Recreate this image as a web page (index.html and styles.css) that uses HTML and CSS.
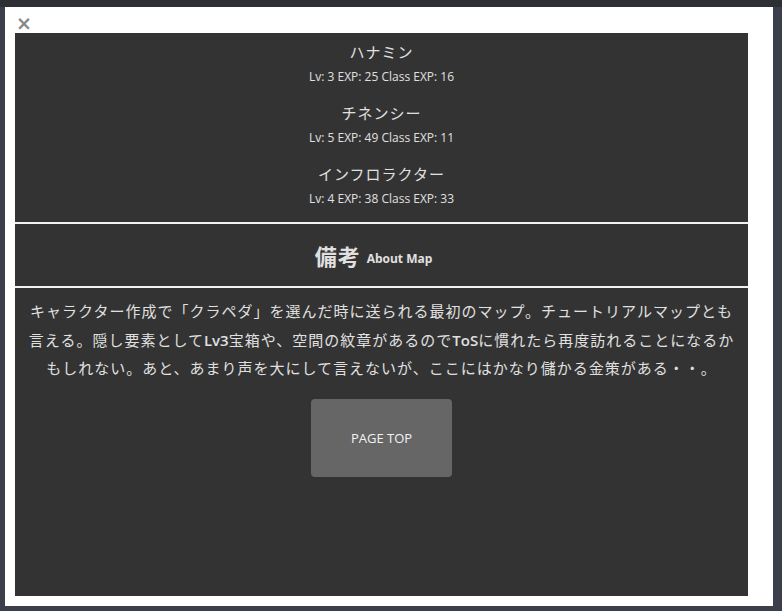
FILE: index.html
```html
<!DOCTYPE html>
<html lang="ja">
<head>
<meta charset="utf-8">
<link rel="stylesheet" href="styles.css">
</head>
<body>
<div class="backdrop">
  <div class="modal">
    <div class="close">×</div>
    <div class="panel">
      <div class="monsters">
        <div class="mon">
          <div class="name">ハナミン</div>
          <div class="stats">Lv: 3 EXP: 25 Class EXP: 16</div>
        </div>
        <div class="mon">
          <div class="name">チネンシー</div>
          <div class="stats">Lv: 5 EXP: 49 Class EXP: 11</div>
        </div>
        <div class="mon">
          <div class="name">インフロラクター</div>
          <div class="stats">Lv: 4 EXP: 38 Class EXP: 33</div>
        </div>
      </div>
      <div class="heading"><span class="h-ja">備考</span> <span class="h-en">About Map</span></div>
      <div class="about">
        <p class="desc">キャラクター作成で「クラペダ」を選んだ時に送られる最初のマップ。チュートリアルマップとも言える。隠し要素として<span class="lat">Lv3</span>宝箱や、空間の紋章があるので<span class="lat">ToS</span>に慣れたら再度訪れることになるかもしれない。あと、あまり声を大にして言えないが、ここにはかなり儲かる金策がある・・。</p>
        <div class="btn">PAGE TOP</div>
      </div>
    </div>
  </div>
</div>
</body>
</html>
```

FILE: styles.css
```css
html, body {
  margin: 0;
  padding: 0;
  height: 100%;
}
body {
  background: #3b3e4b;
  font-family: "Open Sans", "Noto Sans CJK JP", sans-serif;
  overflow: hidden;
}
.backdrop {
  height: 611px;
  background: linear-gradient(#2e2f34 0, #2e2f34 7px, #3b3e4b 7px);
  padding: 7px 0 0 5px;
  box-sizing: border-box;
}
.modal {
  width: 768px;
  height: 599px;
  background: #fff;
  box-sizing: border-box;
  padding: 0 25px 10px 10px;
  display: flex;
  flex-direction: column;
}
.close {
  height: 26px;
  color: #888;
  font-family: "DejaVu Sans", sans-serif;
  font-size: 19px;
  font-weight: bold;
  line-height: 32px;
  padding-left: 1px;
}
.panel {
  flex: 1;
  background: #333;
  color: #e0e0e0;
  display: flex;
  flex-direction: column;
}
.monsters {
  padding: 7px 0 13px;
  display: flex;
  flex-direction: column;
  gap: 14px;
  text-align: center;
  border-bottom: 2px solid #f2f2f2;
}
.name {
  font-size: 15px;
  line-height: 24px;
  letter-spacing: 1px;
}
.stats {
  margin-top: 3px;
  font-size: 12px;
  line-height: 20px;
}
.heading {
  height: 62px;
  border-bottom: 2px solid #f2f2f2;
  display: flex;
  align-items: center;
  justify-content: center;
  gap: 6px;
  padding-right: 16px;
}
.h-ja {
  font-size: 22px;
  font-weight: bold;
  letter-spacing: 1px;
}
.h-en {
  font-size: 12px;
  font-weight: bold;
  margin-top: 6px;
}
.about {
  padding: 9px 8px 0;
  display: flex;
  flex-direction: column;
  align-items: center;
}
.desc {
  margin: 0;
  font-size: 15px;
  line-height: 28.5px;
  letter-spacing: 1px;
  text-align: center;
}
.lat {
  font-weight: 600;
  letter-spacing: 0;
}
.btn {
  margin-top: 16px;
  width: 141px;
  height: 78px;
  background: #666;
  border-radius: 4px;
  display: flex;
  align-items: center;
  justify-content: center;
  font-size: 13px;
  color: #f2f2f2;
}
```
